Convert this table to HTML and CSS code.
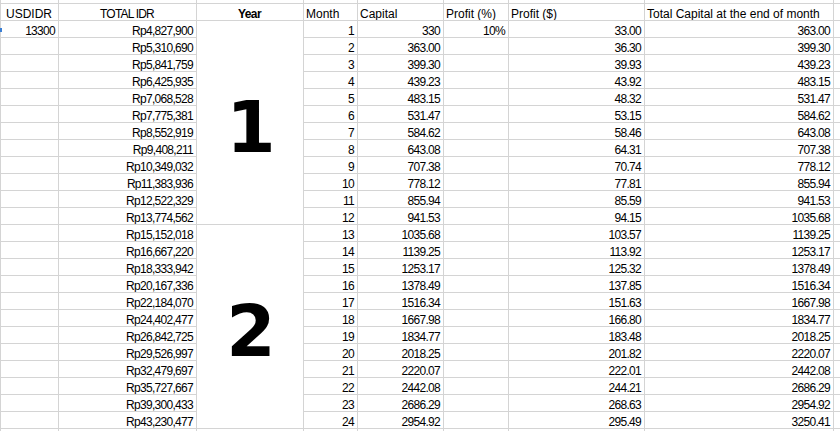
FILE: index.html
```html
<!DOCTYPE html>
<html lang="en">
<head>
<meta charset="utf-8">
<title>Capital growth</title>
<link rel="stylesheet" href="styles.css">
</head>
<body>
<div class="sheet">
  <div class="row edge"><div></div><div></div><div></div><div></div><div></div><div></div><div></div><div></div><div></div></div>
  <div class="row head">
    <div class="c first">USDIDR</div>
    <div class="c center caps">TOTAL IDR</div>
    <div class="c center bold">Year</div>
    <div class="c">Month</div>
    <div class="c">Capital</div>
    <div class="c">Profit (%)</div>
    <div class="c">Profit ($)</div>
    <div class="c">Total Capital at the end of month</div>
    <div class="c"></div>
  </div>
  <div class="row"><div class="n">13300</div><div class="n">Rp4,827,900</div><div class="year">1</div><div class="n">1</div><div class="n">330</div><div class="n">10%</div><div class="n">33.00</div><div class="n">363.00</div><div></div></div>
  <div class="row"><div></div><div class="n">Rp5,310,690</div><div class="n">2</div><div class="n">363.00</div><div></div><div class="n">36.30</div><div class="n">399.30</div><div></div></div>
  <div class="row"><div></div><div class="n">Rp5,841,759</div><div class="n">3</div><div class="n">399.30</div><div></div><div class="n">39.93</div><div class="n">439.23</div><div></div></div>
  <div class="row"><div></div><div class="n">Rp6,425,935</div><div class="n">4</div><div class="n">439.23</div><div></div><div class="n">43.92</div><div class="n">483.15</div><div></div></div>
  <div class="row"><div></div><div class="n">Rp7,068,528</div><div class="n">5</div><div class="n">483.15</div><div></div><div class="n">48.32</div><div class="n">531.47</div><div></div></div>
  <div class="row"><div></div><div class="n">Rp7,775,381</div><div class="n">6</div><div class="n">531.47</div><div></div><div class="n">53.15</div><div class="n">584.62</div><div></div></div>
  <div class="row"><div></div><div class="n">Rp8,552,919</div><div class="n">7</div><div class="n">584.62</div><div></div><div class="n">58.46</div><div class="n">643.08</div><div></div></div>
  <div class="row"><div></div><div class="n">Rp9,408,211</div><div class="n">8</div><div class="n">643.08</div><div></div><div class="n">64.31</div><div class="n">707.38</div><div></div></div>
  <div class="row"><div></div><div class="n">Rp10,349,032</div><div class="n">9</div><div class="n">707.38</div><div></div><div class="n">70.74</div><div class="n">778.12</div><div></div></div>
  <div class="row"><div></div><div class="n">Rp11,383,936</div><div class="n">10</div><div class="n">778.12</div><div></div><div class="n">77.81</div><div class="n">855.94</div><div></div></div>
  <div class="row"><div></div><div class="n">Rp12,522,329</div><div class="n">11</div><div class="n">855.94</div><div></div><div class="n">85.59</div><div class="n">941.53</div><div></div></div>
  <div class="row"><div></div><div class="n">Rp13,774,562</div><div class="n">12</div><div class="n">941.53</div><div></div><div class="n">94.15</div><div class="n">1035.68</div><div></div></div>
  <div class="row"><div></div><div class="n">Rp15,152,018</div><div class="year">2</div><div class="n">13</div><div class="n">1035.68</div><div></div><div class="n">103.57</div><div class="n">1139.25</div><div></div></div>
  <div class="row"><div></div><div class="n">Rp16,667,220</div><div class="n">14</div><div class="n">1139.25</div><div></div><div class="n">113.92</div><div class="n">1253.17</div><div></div></div>
  <div class="row"><div></div><div class="n">Rp18,333,942</div><div class="n">15</div><div class="n">1253.17</div><div></div><div class="n">125.32</div><div class="n">1378.49</div><div></div></div>
  <div class="row"><div></div><div class="n">Rp20,167,336</div><div class="n">16</div><div class="n">1378.49</div><div></div><div class="n">137.85</div><div class="n">1516.34</div><div></div></div>
  <div class="row"><div></div><div class="n">Rp22,184,070</div><div class="n">17</div><div class="n">1516.34</div><div></div><div class="n">151.63</div><div class="n">1667.98</div><div></div></div>
  <div class="row"><div></div><div class="n">Rp24,402,477</div><div class="n">18</div><div class="n">1667.98</div><div></div><div class="n">166.80</div><div class="n">1834.77</div><div></div></div>
  <div class="row"><div></div><div class="n">Rp26,842,725</div><div class="n">19</div><div class="n">1834.77</div><div></div><div class="n">183.48</div><div class="n">2018.25</div><div></div></div>
  <div class="row"><div></div><div class="n">Rp29,526,997</div><div class="n">20</div><div class="n">2018.25</div><div></div><div class="n">201.82</div><div class="n">2220.07</div><div></div></div>
  <div class="row"><div></div><div class="n">Rp32,479,697</div><div class="n">21</div><div class="n">2220.07</div><div></div><div class="n">222.01</div><div class="n">2442.08</div><div></div></div>
  <div class="row"><div></div><div class="n">Rp35,727,667</div><div class="n">22</div><div class="n">2442.08</div><div></div><div class="n">244.21</div><div class="n">2686.29</div><div></div></div>
  <div class="row"><div></div><div class="n">Rp39,300,433</div><div class="n">23</div><div class="n">2686.29</div><div></div><div class="n">268.63</div><div class="n">2954.92</div><div></div></div>
  <div class="row"><div></div><div class="n">Rp43,230,477</div><div class="n">24</div><div class="n">2954.92</div><div></div><div class="n">295.49</div><div class="n">3250.41</div><div></div></div>
  <div class="row edge"><div></div><div></div><div></div><div></div><div></div><div></div><div></div><div></div><div></div></div>
  <span class="handle"></span>
</div>
</body>
</html>
```

FILE: styles.css
```css
html, body {
  margin: 0;
  padding: 0;
  background: #fff;
  overflow: hidden;
}

.sheet {
  position: relative;
  display: grid;
  grid-template-columns: 57px 137px 106px 53px 85px 64px 135px 188px 20px;
  grid-template-rows: 3px repeat(25, 16px) 3px;
  gap: 1px;
  padding-left: 1px;
  width: max-content;
  background: #d4d4d4;
  font-family: "Liberation Sans", Arial, sans-serif;
  font-size: 12px;
  line-height: 12px;
  color: #000;
}

.row {
  display: contents;
}

.row > div {
  background: #fff;
  display: flex;
  align-items: flex-end;
  padding: 0 3px 0 2px;
  white-space: nowrap;
  overflow: hidden;
}

.row > .first {
  padding-left: 5px;
}

.row > .center {
  justify-content: center;
}

.row > .caps {
  letter-spacing: -0.8px;
}

.row > .bold {
  font-weight: bold;
  letter-spacing: -0.6px;
}

.row > .n {
  justify-content: flex-end;
  letter-spacing: -0.7px;
  padding-right: 3px;
}

.row > .year {
  grid-row: span 12;
  align-items: center;
  justify-content: center;
  padding: 10px 0 0 2px;
  font-family: "DejaVu Sans", sans-serif;
  font-weight: bold;
  font-size: 71px;
  line-height: 71px;
}

.handle {
  position: absolute;
  left: 0;
  top: 28px;
  width: 2px;
  height: 4px;
  background: #3b7fd4;
}
```
